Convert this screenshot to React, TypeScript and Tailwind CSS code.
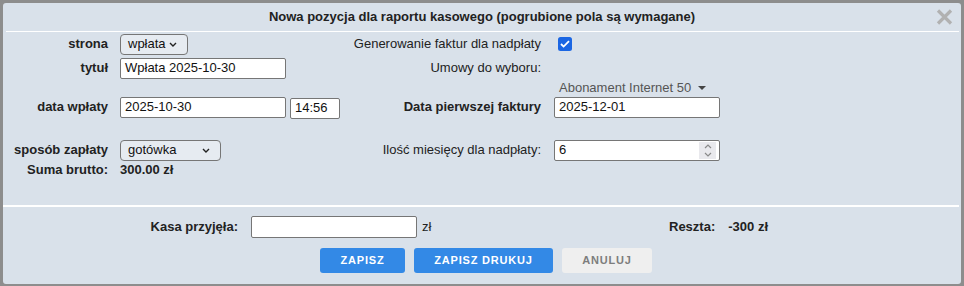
const font = { fontFamily: '"Liberation Sans", Arial, sans-serif' };

function Chevron() {
  return (
    <svg width="8" height="5" viewBox="0 0 8 5" className="shrink-0">
      <path d="M1 1l3 3 3-3" fill="none" stroke="#222" strokeWidth="1.4" />
    </svg>
  );
}

function FakeSelect({ value, width }: { value: string; width: string }) {
  return (
    <div
      className={`flex items-center justify-between h-[21px] ${width} pl-[7px] pr-[10px] border border-[#767676] rounded-[4px] bg-[#e6ebf1] text-[13px] text-[#111]`}
    >
      <span>{value}</span>
      <Chevron />
    </div>
  );
}

function TextBox({ value, width }: { value: string; width: string }) {
  return (
    <div
      className={`flex items-center h-[21px] ${width} pl-[4px] border border-[#767676] rounded-[2px] bg-white text-[13px] text-[#111]`}
    >
      {value}
    </div>
  );
}

export default function App() {
  return (
    <div className="w-[964px] h-[286px] bg-[#8d8d8d] pt-[3px] pl-[3px]" style={font}>
      <div className="relative w-[958px] h-[281px] bg-[#d9e1ea] rounded-[3px] text-[13px] text-[#222]">
        {/* Title */}
        <div className="h-[28px] flex items-center justify-center font-bold">
          Nowa pozycja dla raportu kasowego (pogrubione pola są wymagane)
        </div>
        <svg
          width="17"
          height="16"
          viewBox="0 0 17 16"
          className="absolute left-[933px] top-[6px]"
        >
          <path d="M2 1.5l13 13M15 1.5l-13 13" stroke="#b1b1b1" strokeWidth="3.2" />
        </svg>
        <div className="h-[1px] bg-white ml-[3px] mr-[2px]" />

        {/* Form grid */}
        <div className="grid grid-cols-[105px_237px_196px_1fr] grid-rows-[24px_24px_16px_22px_21px_22px_17px] items-center">
          {/* row 1 */}
          <div className="text-right font-bold">strona</div>
          <div className="pl-[12px]">
            <FakeSelect value="wpłata" width="w-[68px]" />
          </div>
          <div className="text-right">Generowanie faktur dla nadpłaty</div>
          <div className="pl-[17px]">
            <div className="w-[14px] h-[14px] rounded-[2.5px] bg-[#1b66e3] flex items-center justify-center">
              <svg width="10" height="8" viewBox="0 0 10 8">
                <path d="M1 4l2.6 2.6L9 1.2" fill="none" stroke="white" strokeWidth="1.8" />
              </svg>
            </div>
          </div>

          {/* row 2 */}
          <div className="text-right font-bold">tytuł</div>
          <div className="pl-[12px]">
            <TextBox value="Wpłata 2025-10-30" width="w-[166px]" />
          </div>
          <div className="text-right">Umowy do wyboru:</div>
          <div />

          {/* row 3 */}
          <div />
          <div />
          <div />
          <div className="pl-[18px] flex items-center gap-[7px] text-[#555]">
            <span>Abonament Internet 50</span>
            <svg width="8" height="4" viewBox="0 0 8 4">
              <path d="M0 0h8L4 4z" fill="#444" />
            </svg>
          </div>

          {/* row 4 */}
          <div className="text-right font-bold">data wpłaty</div>
          <div className="pl-[12px] flex items-center gap-[4px]">
            <TextBox value="2025-10-30" width="w-[166px]" />
            <div className="mt-[2px]">
              <TextBox value="14:56" width="w-[50px]" />
            </div>
          </div>
          <div className="text-right font-bold">Data pierwszej faktury</div>
          <div className="pl-[13px]">
            <TextBox value="2025-12-01" width="w-[166px]" />
          </div>

          {/* row 5 spacer */}
          <div className="col-span-4" />

          {/* row 6 */}
          <div className="text-right font-bold">sposób zapłaty</div>
          <div className="pl-[12px]">
            <FakeSelect value="gotówka" width="w-[101px]" />
          </div>
          <div className="text-right">Ilość miesięcy dla nadpłaty:</div>
          <div className="pl-[13px]">
            <div className="flex items-center justify-between h-[21px] w-[166px] pl-[4px] pr-[3px] border border-[#767676] rounded-[2px] bg-white text-[13px] text-[#111]">
              <span>6</span>
              <div className="w-[17px] h-[17px] bg-[#e9e9ed] flex flex-col items-center justify-center gap-[3px]">
                <svg width="8" height="5" viewBox="0 0 8 5">
                  <path d="M1 4l3-3 3 3" fill="none" stroke="#8a8a8a" strokeWidth="1.2" />
                </svg>
                <svg width="8" height="5" viewBox="0 0 8 5">
                  <path d="M1 1l3 3 3-3" fill="none" stroke="#8a8a8a" strokeWidth="1.2" />
                </svg>
              </div>
            </div>
          </div>

          {/* row 7 */}
          <div className="text-right font-bold">Suma brutto:</div>
          <div className="pl-[12px] font-bold">300.00 zł</div>
          <div />
          <div />
        </div>

        <div className="h-[27px]" />
        <div className="h-[2px] bg-white mr-[2px]" />

        {/* Cash row */}
        <div className="mt-[9px] h-[22px] flex items-center">
          <div className="w-[235px] text-right font-bold">Kasa przyjęła:</div>
          <div className="ml-[13px] h-[22px] w-[166px] border border-[#767676] rounded-[2px] bg-white" />
          <div className="ml-[5px] w-[247px]">zł</div>
          <div className="font-bold">Reszta:</div>
          <div className="ml-[13px] font-bold">-300 zł</div>
        </div>

        {/* Buttons */}
        <div className="mt-[10px] flex justify-center gap-[9px] pl-[8px] text-[11px] font-bold tracking-[0.8px]">
          <div className="h-[25px] w-[85px] flex items-center justify-center rounded-[3px] bg-[#3389e6] text-white">
            ZAPISZ
          </div>
          <div className="h-[25px] w-[139px] flex items-center justify-center rounded-[3px] bg-[#3389e6] text-white">
            ZAPISZ DRUKUJ
          </div>
          <div className="h-[25px] w-[90px] flex items-center justify-center rounded-[3px] bg-[#efefef] text-[#7d7d7d]">
            ANULUJ
          </div>
        </div>
      </div>
    </div>
  );
}
